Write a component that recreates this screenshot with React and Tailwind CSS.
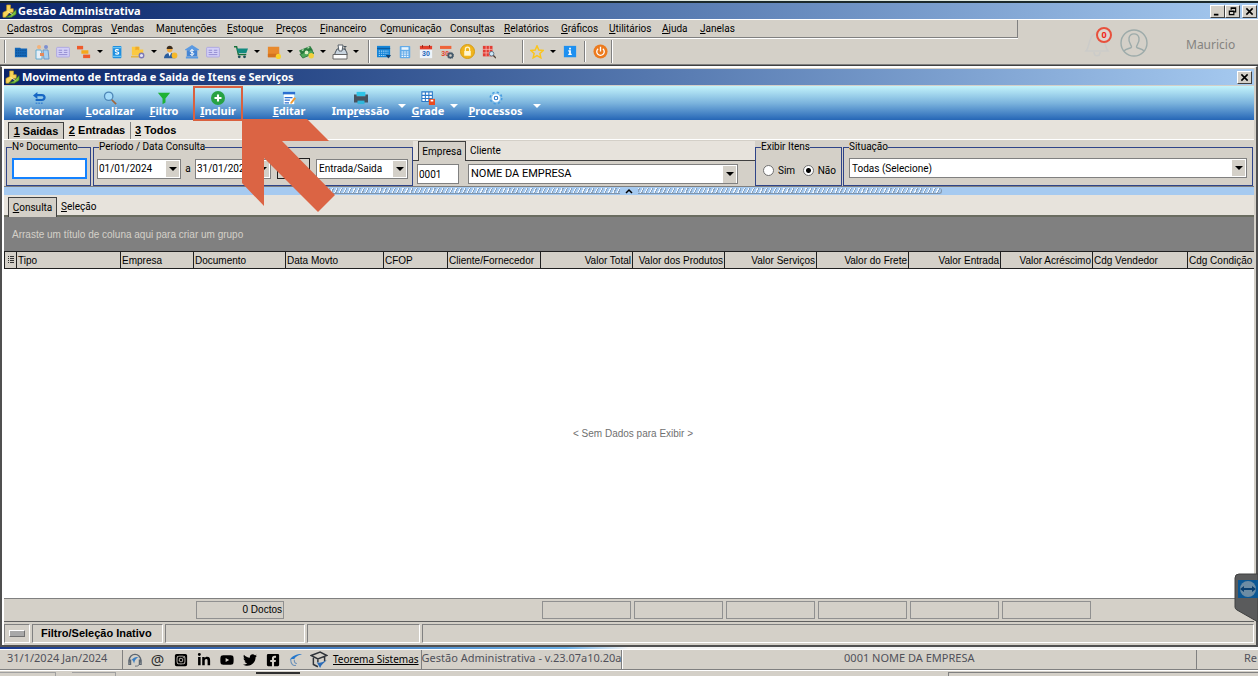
import React from 'react';
import { FaLinkedinIn, FaYoutube, FaTwitter, FaFacebookSquare } from 'react-icons/fa';
import { FaSquareInstagram } from 'react-icons/fa6';

const MENU = [
    ['', 'C', 'adastros'], ['Co', 'm', 'pras'], ['', 'V', 'endas'], ['Ma', 'n', 'utenções'],
    ['', 'E', 'stoque'], ['', 'P', 'reços'], ['', 'F', 'inanceiro'], ['C', 'o', 'municação'],
    ['Consu', 'l', 'tas'], ['', 'R', 'elatórios'], ['', 'G', 'ráficos'], ['', 'U', 'tilitários'],
    ['', 'A', 'juda'], ['', 'J', 'anelas'],
];

const COLUMNS = [
    { label: 'Tipo', width: 'w-[104px]' },
    { label: 'Empresa', width: 'w-[73px]' },
    { label: 'Documento', width: 'w-[92px]' },
    { label: 'Data Movto', width: 'w-[98px]' },
    { label: 'CFOP', width: 'w-16' },
    { label: 'Cliente/Fornecedor', width: 'w-[93px]' },
    { label: 'Valor Total', width: 'w-[92px]', right: true },
    { label: 'Valor dos Produtos', width: 'w-[92px]', right: true },
    { label: 'Valor Serviços', width: 'w-[92px]', right: true },
    { label: 'Valor do Frete', width: 'w-[92px]', right: true },
    { label: 'Valor Entrada', width: 'w-[92px]', right: true },
    { label: 'Valor Acréscimo', width: 'w-[92px]', right: true },
    { label: 'Cdg Vendedor', width: 'w-[95px]' },
    { label: 'Cdg Condição', width: '' },
];

const Hot = ({ parts }) => (
    <>
        {parts[0]}
        <span className="underline underline-offset-1">{parts[1]}</span>
        {parts[2]}
    </>
);

const Svg = ({ children, className = 'size-[14px]' }) => (
    <svg viewBox="0 0 16 16" fill="none" className={`shrink-0 ${className}`} aria-hidden="true">
        {children}
    </svg>
);

const AppLogo = () => (
    <Svg className="size-[15px]">
        <path d="M5 1h4v4h3v4H8l-4 5H1V9l4-2z" fill="#f7d55a" stroke="#c79a22" strokeWidth=".7" />
        <path d="M4 14l5-2 6-6v5l-5 3z" fill="#7cc03c" stroke="#3c7a1c" strokeWidth=".7" />
        <path d="M6 8l5 3" stroke="#fff3b0" />
    </Svg>
);

const icons = {
    archive: (
        <Svg>
            <path d="M1 3h6l1 1h7v10H1z" fill="#1467b8" />
            <path d="M2 6h12M2 9h12M2 12h12" stroke="#0d4b8f" strokeDasharray="1.5 1" />
        </Svg>
    ),
    people: (
        <Svg className="size-4">
            <circle cx="5" cy="3" r="2" fill="#f3b27a" />
            <circle cx="12" cy="3" r="2" fill="#7c8fd0" />
            <path d="M2 6h5l1 4v5H2z" fill="#e6eef6" stroke="#58a6cf" strokeWidth=".9" />
            <path d="M9 6h5l1 9h-5z" fill="#a9d0ee" stroke="#6595c9" strokeWidth=".9" />
            <path d="M6 9h4v3H6z" fill="#e4895a" />
        </Svg>
    ),
    card: (
        <Svg>
            <rect x=".7" y="2.7" width="14.6" height="11" rx="1" fill="#d3cff6" stroke="#aaa4e0" />
            <path d="M3 6h4M3 8.500h4M9 6h4M9 8.500h4M3 11h10" stroke="#8b84cc" />
        </Svg>
    ),
    tree: (
        <Svg>
            <path d="M0 1h7v4H0z" fill="#ef5a2a" />
            <path d="M5 6h8v4H5z" fill="#f4a71c" />
            <path d="M7 11h8v4H7z" fill="#ef5a2a" />
        </Svg>
    ),
    moneyDoc: (
        <Svg>
            <rect x="3" y="1" width="10" height="14" rx="1" fill="#1e8fe0" />
            <path d="M3 3h10M3 13h10" stroke="#6cc4f4" strokeWidth="1.500" />
            <path d="M10 6c-1-1-4-1-4 .7s4 .8 4 2.400-3 1.600-4 .6" stroke="#fff" strokeWidth="1.300" />
        </Svg>
    ),
    boxes: (
        <Svg>
            <path d="M1 2h9v3h4v5h-2v2H1z" fill="#fbc941" />
            <path d="M5 2v4l2-1 2 1V2z" fill="#f0a92a" />
            <path d="M0 13.500h9" stroke="#e9b02e" strokeWidth="1.500" />
            <circle cx="12" cy="12" r="2.600" fill="#e4e2f2" stroke="#7a78b8" strokeWidth="1.500" />
        </Svg>
    ),
    clerk: (
        <Svg>
            <circle cx="6.500" cy="5" r="3.200" fill="#f2a93c" />
            <path d="M3 4.500c0-5 7-5 7 0z" fill="#3a2d20" />
            <path d="M0 15c0-8 13-8 13 0z" fill="#2a5d9e" />
            <path d="M5 9h3l-1.500 4z" fill="#fff" />
            <circle cx="12" cy="12" r="3.300" fill="#f6b82a" />
        </Svg>
    ),
    bank: (
        <Svg>
            <path d="M0 5l8-5 8 5v1H0zM1 13h14v2.500H1z" fill="#5b9ae2" />
            <rect x="2" y="6" width="12" height="7" fill="#4585d4" />
            <path d="M10 6.500c-1-1-4-1-4 .7s4 .9 4 2.700-3 1.900-4 .8M8 4.500v8" stroke="#fff" strokeWidth="1.100" />
        </Svg>
    ),
    cart: (
        <Svg>
            <path d="M0 2h3l2 9h9" stroke="#18703a" strokeWidth="1.600" />
            <path d="M3 4h13l-2 5.500H5z" fill="#128a80" />
            <circle cx="6" cy="13.500" r="1.600" fill="#1f4f58" />
            <circle cx="12" cy="13.500" r="1.600" fill="#1f4f58" />
        </Svg>
    ),
    package: (
        <Svg>
            <rect x="1" y="2" width="13" height="12" fill="#e8892c" />
            <path d="M1 10h13v4H1z" fill="#d4721e" />
            <circle cx="13" cy="13" r="3" fill="#fbd42c" />
        </Svg>
    ),
    cash: (
        <Svg className="size-[15px]">
            <path d="M0 7l12-5 3 5-12 5z" fill="#2c7f40" />
            <path d="M1 11l12-5 3 4-12 5z" fill="#4fa85a" stroke="#1e6b33" strokeWidth=".8" />
            <path d="M3 7l2-1M9 4.500l2-1" stroke="#bfe6b8" strokeWidth="1.300" />
            <circle cx="8" cy="9" r="2" fill="#dff0c8" />
            <circle cx="13" cy="12.500" r="2.900" fill="#f3cf3a" />
        </Svg>
    ),
    register: (
        <Svg className="size-4">
            <path d="M3 9l2-4h8l2 4v2H3z" fill="#c9d4de" stroke="#4a545e" />
            <path d="M6 1h5l-1 6H7z" fill="#fff" stroke="#4a545e" strokeWidth=".9" />
            <path d="M11.500 2.500h3M13 2.500V6" stroke="#4a545e" />
            <path d="M1 10.500h14V15H1z" fill="#fdfdfd" stroke="#666" />
        </Svg>
    ),
    calBlue: (
        <Svg>
            <rect x="0" y="1" width="15" height="13" fill="#1585d8" />
            <path d="M0 4h15" stroke="#0b5ca0" strokeWidth="1.500" />
            <path d="M2 7h11M2 9.500h11M2 12h8" stroke="#a4d4f8" strokeWidth="1.200" strokeDasharray="1.500 1" />
            <path d="M10 11.500h6l-3 4z" fill="#17406c" />
        </Svg>
    ),
    calc: (
        <Svg>
            <rect x="2" y="1" width="12" height="14" rx="1" fill="#63abe8" />
            <rect x="4" y="2.500" width="8" height="3" fill="#e8f4fd" />
            <path d="M4 8h8M4 10.500h8M4 13h8" stroke="#f5faff" strokeWidth="1.400" strokeDasharray="2 1" />
        </Svg>
    ),
    cal30: (
        <Svg>
            <rect x="1" y="2" width="14" height="13" fill="#edf3fa" />
            <rect x="1" y="1" width="14" height="4" fill="#e2402c" />
            <path d="M4 0v3M12 0v3" stroke="#8c2015" />
            <text x="8" y="12.500" textAnchor="middle" fontSize="8" fontWeight="700" fontFamily="Liberation Sans, sans-serif" fill="#1c63b8">30</text>
        </Svg>
    ),
    cal30Gear: (
        <Svg>
            <rect x="0" y="1" width="13" height="3.500" fill="#ee6338" />
            <text x="6" y="12" textAnchor="middle" fontSize="8" fontWeight="700" fontFamily="Liberation Sans, sans-serif" fill="#e2402c">30</text>
            <circle cx="12" cy="12" r="2.500" stroke="#43586a" strokeWidth="2" />
            <circle cx="12" cy="12" r="3.700" stroke="#43586a" strokeDasharray="1.300 1.300" />
        </Svg>
    ),
    lock: (
        <Svg className="size-[15px]">
            <circle cx="8" cy="8" r="7.500" fill="#f0b41c" stroke="#d39a10" />
            <path d="M5.700 8V5.500c0-3 4.600-3 4.600 0V8" stroke="#fff6cf" strokeWidth="1.300" />
            <rect x="4.500" y="7.500" width="7" height="5" fill="#fff6cf" />
        </Svg>
    ),
    gridSearch: (
        <Svg>
            <rect x="1" y="1" width="11" height="12" fill="#e23c33" />
            <path d="M1 5h11M1 9h11M4.700 1v12M8.400 1v12" stroke="#f9c6c0" strokeWidth=".8" />
            <circle cx="11" cy="10" r="2.600" fill="#cfe6f5" stroke="#55748a" />
            <path d="M13 12l3 3" stroke="#4a3b30" strokeWidth="1.500" />
        </Svg>
    ),
    star: (
        <Svg>
            <path d="M8 1l2.100 4.700 5 .5-3.800 3.400 1.100 5L8 12l-4.400 2.600 1.100-5L.9 6.200l5-.5z" stroke="#fbc51c" strokeWidth="1.700" />
        </Svg>
    ),
    info: (
        <Svg>
            <rect x="1" y="1" width="14" height="13" fill="#1e90f0" />
            <path d="M7 3h2v2H7zM6 6h3v4h1v1.500H6V10h1V7.500H6z" fill="#fff" />
        </Svg>
    ),
    power: (
        <Svg className="size-[15px]">
            <circle cx="8" cy="8" r="7.500" fill="#ec7a1d" />
            <path d="M5.500 5a4 4 0 1 0 5 0M8 3v5" stroke="#fff" strokeWidth="1.400" />
        </Svg>
    ),
};

const ToolIcon = ({ name, label }) => (
    <button aria-label={label} className="flex w-[21px] shrink-0 items-center justify-center">
        {icons[name]}
    </button>
);

const Caret = ({ label, light }) => (
    <button aria-label={label} className="flex w-3 shrink-0 items-center justify-center">
        <span className={`border-transparent ${light ? 'border-x-4 border-t-4 border-t-white' : 'border-x-[3px] border-t-[3px] border-t-black'}`} />
    </button>
);

const Sep = () => <span className="h-full w-[2px] shrink-0 border-l border-[#808080] bg-white" />;

const WinButton = ({ label, children }) => (
    <button
        aria-label={label}
        className="flex h-[13px] w-[15px] items-center justify-center border border-t-white border-r-[#404040] border-b-[#404040] border-l-white bg-[#d4d0c8]"
    >
        <svg viewBox="0 0 10 10" className="size-[9px]" fill="none" stroke="#000">{children}</svg>
    </button>
);

const Cross = () => <path d="M1.500 1.500l7 7M8.500 1.500l-7 7" strokeWidth="1.700" />;

const ribbonIcons = {
    back: (
        <Svg>
            <path d="M0 5l5-4v2.500h5c6 0 6 8 0 8H3V9h7c2.500 0 2.500-3 0-3H5v3z" fill="#1766c4" />
            <path d="M3 14h9" stroke="#3e86d4" strokeWidth="1.500" strokeDasharray="2 1" />
        </Svg>
    ),
    search: (
        <Svg>
            <circle cx="6.500" cy="6" r="4.800" fill="#a5dcfa" stroke="#4e87b8" strokeWidth="1.500" />
            <path d="M10 10l5 5" stroke="#a0663c" strokeWidth="2" />
        </Svg>
    ),
    filter: <Svg><path d="M1 2h14L9.700 8.500V13L6.300 15V8.500z" fill="#1fb235" /></Svg>,
    add: (
        <Svg>
            <circle cx="8" cy="8" r="8" fill="#27a243" />
            <path d="M8 4v8M4 8h8" stroke="#fff" strokeWidth="2.400" />
        </Svg>
    ),
    edit: (
        <Svg>
            <path d="M1 1h14v3H1z" fill="#2b6fd0" />
            <path d="M2 4h12v11H2z" fill="#fff" />
            <path d="M3 7.500h9M3 10.500h6M3 13.500h5" stroke="#2b6fd0" strokeWidth="1.500" />
            <path d="M9 14l5-7 2 1.500-5 6z" fill="#f39a2d" />
        </Svg>
    ),
    print: (
        <Svg>
            <rect x="3" y="1" width="10" height="5" fill="#2fc4e6" />
            <path d="M0 4h3v2h10V4h3v9H0z" fill="#47525e" />
            <rect x="4" y="11" width="8" height="4" fill="#2fb6dc" />
        </Svg>
    ),
    grid: (
        <Svg>
            <rect x="1" y="1" width="12" height="11" fill="#fff" />
            <path d="M1 1h12v11H1zM5 1v11M9 1v11M1 5h12M1 8.500h12" stroke="#2a78c8" strokeWidth="1.200" />
            <rect x="9" y="9" width="7" height="7" fill="#ea4a1e" />
            <path d="M11 10h3v2h-3z" fill="#fff" />
        </Svg>
    ),
    gear: (
        <Svg>
            <circle cx="8" cy="8" r="6.500" stroke="#4a9de0" strokeWidth="2" strokeDasharray="2.600 2.500" />
            <circle cx="8" cy="8" r="5" fill="#fff" stroke="#8cc4ee" />
            <circle cx="8" cy="8" r="2" stroke="#2a78c8" strokeWidth="1.300" />
        </Svg>
    ),
};

const RibbonButton = ({ icon, parts, className = '' }) => (
    <button className={`flex flex-col items-center text-white ${className}`}>
        {ribbonIcons[icon]}
        <span className="font-['Noto_Sans'] text-[11px] leading-[11px] font-bold whitespace-nowrap">
            <Hot parts={parts} />
        </span>
    </button>
);

const Group = ({ title, className, children }) => (
    <fieldset className={`min-w-0 border border-[#2f4488] px-[3px] ${className}`}>
        <legend className="ml-[2px] h-3 leading-3">{title}</legend>
        {children}
    </fieldset>
);

const DropMark = () => (
    <span className="pointer-events-none flex w-[13px] shrink-0 items-center justify-center bg-[#d4d0c8]">
        <span className="border-x-4 border-t-4 border-transparent border-t-black" />
    </span>
);

const DateBox = ({ label, value, className }) => (
    <div className={`flex h-5 border border-[#808080] bg-white p-px ${className}`}>
        <input aria-label={label} defaultValue={value} className="w-full min-w-0 outline-none" />
        <DropMark />
    </div>
);

const Combo = ({ label, value, className }) => (
    <div className={`grid h-5 border border-[#808080] bg-white p-px ${className}`}>
        <select aria-label={label} className="col-start-1 row-start-1 w-full appearance-none pl-px outline-none">
            <option>{value}</option>
        </select>
        <span className="col-start-1 row-start-1 flex justify-self-end"><DropMark /></span>
    </div>
);

const StatusCell = ({ className, children }) => (
    <div className={`flex h-[19px] items-center border border-t-[#808080] border-r-white border-b-white border-l-[#808080] ${className}`}>
        {children}
    </div>
);

const Header = () => (
    <header className="bg-[#d4d0c8]">
        <div className="h-[3px] border-t border-[#dfe8e0] bg-[#1c2a2c]" />
        <div className="flex h-4 items-center justify-between bg-linear-to-r from-[#0a246a] to-[#a6caf0] pr-px pl-[2px]">
            <h1 className="flex items-center gap-px font-['Noto_Sans'] text-[11px] font-bold text-white">
                <AppLogo /> Gestão Administrativa
            </h1>
            <div className="flex">
                <WinButton label="Minimizar"><path d="M1 8.500h5" strokeWidth="2" /></WinButton>
                <WinButton label="Restaurar"><path d="M3.500 3V1h5v4.500H7M1.500 4.500h5v4h-5zM3.500 1.500h5M1.500 5h5" strokeWidth="1.300" /></WinButton>
                <span className="w-[2px]" />
                <WinButton label="Fechar"><Cross /></WinButton>
            </div>
        </div>
        <div className="flex h-[45px] border-t border-white">
            <div className="min-w-0 flex-1">
                <nav className="grid h-[18px] grid-cols-[55px_49px_45px_71px_49px_44px_60px_70px_54px_57px_48px_53px_38px_auto] items-center border-r border-b border-[#808080] pl-[7px] text-left">
                    {MENU.map(parts => (
                        <button key={parts.join('')} className="text-left whitespace-nowrap"><Hot parts={parts} /></button>
                    ))}
                </nav>
                <div className="flex h-[26px] items-stretch border-t border-white">
                    <div className="flex w-[370px] py-px pl-1">
                        <Sep />
                        <div className="flex w-[220px] pl-1">
                            <ToolIcon name="archive" label="Arquivo" />
                            <ToolIcon name="people" label="Pessoas" />
                            <ToolIcon name="card" label="Cartões" />
                            <ToolIcon name="tree" label="Plano de contas" />
                            <Caret label="Mais contas" />
                            <ToolIcon name="moneyDoc" label="Documento financeiro" />
                            <ToolIcon name="boxes" label="Itens" />
                            <Caret label="Mais itens" />
                            <ToolIcon name="clerk" label="Vendedor" />
                            <ToolIcon name="bank" label="Banco" />
                            <ToolIcon name="card" label="Cheques" />
                        </div>
                        <div className="flex flex-1 pl-1">
                            <ToolIcon name="cart" label="Vendas" />
                            <Caret label="Mais vendas" />
                            <ToolIcon name="package" label="Estoque" />
                            <Caret label="Mais estoque" />
                            <ToolIcon name="cash" label="Financeiro" />
                            <Caret label="Mais financeiro" />
                            <ToolIcon name="register" label="Caixa" />
                            <Caret label="Mais caixa" />
                        </div>
                        <Sep />
                    </div>
                    <div className="flex w-[154px] py-px pl-[3px]">
                        <div className="flex flex-1">
                            <ToolIcon name="calBlue" label="Agenda" />
                            <ToolIcon name="calc" label="Calculadora" />
                            <ToolIcon name="cal30" label="Calendário" />
                            <ToolIcon name="cal30Gear" label="Configurar calendário" />
                            <ToolIcon name="lock" label="Bloquear" />
                            <ToolIcon name="gridSearch" label="Pesquisar grade" />
                        </div>
                        <Sep />
                    </div>
                    <div className="flex w-[89px] py-px pl-[2px]">
                        <ToolIcon name="star" label="Favoritos" />
                        <Caret label="Mais favoritos" />
                        <ToolIcon name="info" label="Informações" />
                        <div className="flex flex-1 py-px pl-1"><Sep /></div>
                        <ToolIcon name="power" label="Sair" />
                        <Sep />
                    </div>
                </div>
            </div>
            <div className="flex w-[240px] shrink-0 items-center pt-px pl-[66px]">
                <button aria-label="Notificações" className="relative">
                    <svg viewBox="0 0 28 30" className="h-[30px] w-7" fill="none" stroke="#cbcbc9">
                        <path d="M2 23c4-4 2-16 11-18 9 2 7 14 11 18zM10 24c0 5 6 5 6 0" strokeWidth="1.500" />
                    </svg>
                    <span className="absolute -top-px left-3 flex size-4 items-center justify-center rounded-full border-2 border-[#e8503c] bg-[#ddd6ce] font-['Noto_Sans'] text-[9px] font-bold text-[#f0281c]">0</span>
                </button>
                <svg viewBox="0 0 28 28" className="ml-2 size-7" fill="none" stroke="#9dabaa" strokeWidth="1.400">
                    <circle cx="14" cy="14" r="13" />
                    <path d="M4 22c2-3 7-2 7.500-4 .4-1.500-3.500-4-2.500-9 1-5.500 9-5.500 10 0 1 5-2.900 7.500-2.500 9 .5 2 5.500 1 7.500 4" />
                </svg>
                <span className="ml-[38px] pt-1 font-['Noto_Sans'] text-xs text-[#858380]">Mauricio</span>
            </div>
        </div>
        <div className="h-[2px] border-t border-[#808080] bg-[#404040]" />
    </header>
);

const Ribbon = () => (
    <div className="flex h-[34px] bg-linear-to-b from-[#c4f4fb] via-[#7cb4dd] to-[#2566b6] pt-[5px]">
        <RibbonButton icon="back" parts={['Retornar', '', '']} className="w-[71px]" />
        <RibbonButton icon="search" parts={['', 'L', 'ocalizar']} className="w-[70px]" />
        <RibbonButton icon="filter" parts={['', 'F', 'iltro']} className="w-[38px]" />
        <div className="relative mx-[11px] flex w-12 justify-center">
            <RibbonButton icon="add" parts={['', 'I', 'ncluir']} />
            <span className="pointer-events-none absolute -inset-x-px -top-[5px] -bottom-px z-10 border-2 border-[#d9613f]" />
            <svg viewBox="0 0 94 94" className="pointer-events-none absolute top-[28px] left-12 z-20 size-[94px]" fill="#db6444" aria-hidden="true">
                <path d="M0 0H65L87 22H40L93 76L76 93L22 39V87L0 64Z" />
            </svg>
        </div>
        <RibbonButton icon="edit" parts={['', 'E', 'ditar']} className="w-[72px]" />
        <RibbonButton icon="print" parts={['Imp', 'r', 'essão']} className="w-[71px]" />
        <Caret light label="Opções de impressão" />
        <RibbonButton icon="grid" parts={['', 'G', 'rade']} className="w-10" />
        <Caret light label="Opções de grade" />
        <RibbonButton icon="gear" parts={['', 'P', 'rocessos']} className="w-[71px]" />
        <Caret light label="Opções de processos" />
    </div>
);

const Filters = () => (
    <form className="flex h-12 border-t border-b border-t-white border-b-[#808080] bg-[#d4d0c8] pt-px pr-px pl-[2px]">
        <Group title="Nº Documento" className="w-[85px]">
            <input aria-label="Nº Documento" className="mt-[5px] ml-[2px] h-[21px] w-[75px] border-2 border-[#1482ff] bg-white px-1 outline-none" />
        </Group>
        <Group title="Período / Data Consulta" className="ml-[2px] w-[320px]">
            <div className="mt-[5px] flex items-center">
                <DateBox label="Data inicial" value="01/01/2024" className="w-[84px]" />
                <span className="w-[14px] text-center">a</span>
                <DateBox label="Data final" value="31/01/2024" className="w-[76px]" />
                <button aria-label="Selecionar período" className="mx-[6px] h-[21px] w-[33px] border border-[#202020]" />
                <Combo label="Tipo de movimento" value="Entrada/Saida" className="w-[92px]" />
            </div>
        </Group>
        <div className="flex w-[342px] flex-col">
            <div className="flex h-5 items-stretch bg-[#e7e3dc]">
                <span className="w-[5px] border-b border-[#404040]" />
                <button className="w-12 border border-b-0 border-[#404040] bg-[#d4d0c8]">Empresa</button>
                <button className="flex-1 border-b border-[#404040] pl-1 text-left">Cliente</button>
            </div>
            <div className="mt-[3px] flex gap-[9px] pl-1">
                <input aria-label="Código da empresa" defaultValue="0001" className="h-5 w-[42px] border border-[#808080] bg-white px-px outline-none" />
                <Combo label="Empresa" value="NOME DA EMPRESA" className="w-[270px] text-[11px]" />
            </div>
        </div>
        <Group title="Exibir Itens" className="w-[87px]">
            <div className="mt-[10px] flex items-center justify-between pr-[2px] pl-1">
                {['Sim', 'Não'].map(option => (
                    <label key={option} className="flex items-center gap-1">
                        <input
                            type="radio"
                            name="exibir"
                            defaultChecked={option === 'Não'}
                            className="size-[11px] appearance-none rounded-full border border-[#707070] bg-white checked:bg-[radial-gradient(circle,#000_2px,#fff_3px)]"
                        />
                        {option}
                    </label>
                ))}
            </div>
        </Group>
        <Group title="Situação" className="ml-px flex-1">
            <Combo label="Situação" value="Todas (Selecione)" className="mt-[5px] mr-[2px] ml-[2px]" />
        </Group>
    </form>
);

const Splitter = () => (
    <div className="flex h-2 justify-center bg-[#a6caf0] pr-[6px]">
        <div className="my-px w-[310px] border-b border-[#8095ac] bg-[repeating-linear-gradient(115deg,#eef6ff_0_1px,#8aa2bd_1px_2px,#a6caf0_2px_4px)]" />
        <button aria-label="Recolher filtros" className="flex w-[18px] items-center justify-center">
            <svg viewBox="0 0 8 6" className="h-[6px] w-2" fill="none" stroke="#000" strokeWidth="1.500"><path d="M1 5l3-3 3 3" /></svg>
        </button>
        <div className="my-px w-[304px] rounded-r-sm border-r border-b border-[#8095ac] bg-[repeating-linear-gradient(115deg,#eef6ff_0_1px,#8aa2bd_1px_2px,#a6caf0_2px_4px)]" />
    </div>
);

const DataGrid = () => (
    <section className="flex flex-1 flex-col bg-white font-['Liberation_Sans'] text-[10px]">
        <div className="flex h-[34px] items-center bg-[#808080] pl-2 text-[#d4d0c8]">
            Arraste um título de coluna aqui para criar um grupo
        </div>
        <table className="w-full table-fixed border-collapse">
            <thead>
                <tr className="h-[17px] bg-[#d4d0c8]">
                    <th className="w-3 border border-[#202020] p-0">
                        <svg viewBox="0 0 8 10" className="mx-auto h-[10px] w-2" stroke="#333"><path d="M3 1.500h4M3 3.500h4M3 5.500h4M3 7.500h4M1 1.500h1M1 3.500h1M1 5.500h1M1 7.500h1" /></svg>
                    </th>
                    {COLUMNS.map(({ label, width, right }) => (
                        <th
                            key={label}
                            className={`overflow-hidden border border-r-0 border-[#202020] px-px py-0 font-normal whitespace-nowrap ${width} ${right ? 'text-right' : 'text-left'}`}
                        >
                            {label}
                        </th>
                    ))}
                </tr>
            </thead>
        </table>
        <div className="flex flex-1 items-center justify-center pl-2 text-[#707070]">&lt; Sem Dados para Exibir &gt;</div>
        <div className="grid h-6 grid-cols-[189px_92px_255px_repeat(6,92px)_1fr] items-center border-t border-b border-t-[#808080] border-b-[#606060] bg-[#d4d0c8]">
            <span />
            <output className="mr-px ml-[3px] h-[18px] border border-[#909090] pr-px text-right leading-4">0 Doctos</output>
            <span />
            {COLUMNS.filter(c => c.right).map(c => (
                <output key={c.label} aria-label={c.label} className="mr-px ml-[2px] h-[18px] border border-[#909090]" />
            ))}
        </div>
    </section>
);

const MovementWindow = () => (
    <main className="flex flex-1 flex-col border-2 border-t border-[#505050] border-t-white bg-[#d4d0c8]">
        <div className="flex flex-1 flex-col border-2 border-t border-b-0 border-white border-r-[#d4d0c8]">
            <div className="mt-px flex h-4 items-center justify-between bg-linear-to-r from-[#0a246a] to-[#a6caf0] pr-[2px] pl-px">
                <h2 className="flex items-center gap-[2px] font-['Noto_Sans'] text-[11px] font-bold text-white">
                    <AppLogo /> Movimento de Entrada e Saida de Itens e Serviços
                </h2>
                <WinButton label="Fechar janela"><Cross /></WinButton>
            </div>
            <div className="h-px bg-[#d4d0c8]" />
            <Ribbon />
            <div className="flex h-[19px] items-stretch bg-[#e7e3dc] pt-[2px] pl-1 font-['Liberation_Sans'] text-[11px] font-bold">
                <button className="w-14 border border-b-0 border-[#404040] bg-[#d4d0c8]"><Hot parts={['', '1', ' Saidas']} /></button>
                <button className="w-[67px] border-r border-[#808080]"><Hot parts={['', '2', ' Entradas']} /></button>
                <button className="px-1"><Hot parts={['', '3', ' Todos']} /></button>
            </div>
            <Filters />
            <Splitter />
            <div className="flex h-[22px] items-stretch border-b-2 border-[#6a6c60] bg-[#e7e3dc] pt-[2px] pl-1">
                <button className="-mb-[2px] w-[49px] border border-b-0 border-[#404040] bg-[#d4d0c8]"><Hot parts={['', 'C', 'onsulta']} /></button>
                <button className="px-1"><Hot parts={['', 'S', 'eleção']} /></button>
            </div>
            <DataGrid />
            <div className="flex h-[23px] items-center gap-[2px]">
                <StatusCell className="w-[26px] justify-center">
                    <span className="h-[7px] w-4 border border-t-white border-r-[#707070] border-b-[#707070] border-l-white bg-[#a8a8a8]" />
                </StatusCell>
                <StatusCell className="w-[131px] pl-2 font-['Liberation_Sans'] text-[11px] font-bold">Filtro/Seleção Inativo</StatusCell>
                <StatusCell className="w-[140px]" />
                <StatusCell className="w-[113px]" />
                <StatusCell className="flex-1" />
            </div>
        </div>
    </main>
);

const Footer = () => (
    <footer className="bg-[#d4d0c8] text-[#50505a]">
        <div className="h-[2px] bg-linear-to-r from-[#1c3a8c] via-[#6ab0e8] via-45% to-[#f4f4f4] to-50%" />
        <div className="flex h-[21px] items-stretch border-t border-b border-t-white border-b-[#808080] font-['Noto_Sans'] text-[11px] leading-[15px] whitespace-nowrap">
            <span className="w-[123px] border-r border-[#808080] pl-[7px]">31/1/2024 Jan/2024</span>
            <nav className="flex items-center text-[14px] text-black">
                <a href="#suporte" aria-label="Suporte" className="flex w-[23px] justify-center">
                    <Svg>
                        <path d="M1.500 11V8a6.500 6.500 0 0 1 13 0v3M1 8h2v5H1zM13 8h2v5h-2z" stroke="#5b6570" strokeWidth="1.400" />
                        <path d="M4 8c3-4 6-4 9-3-3 0-5 2-6 7-1-2-1-4-3-4z" fill="#3a7fc4" />
                        <path d="M13 13c-1 2-3 2-5 2" stroke="#5b6570" />
                    </Svg>
                </a>
                <a href="#email" aria-label="E-mail" className="w-[23px] text-center text-[15px] text-[#303030]">@</a>
                <a href="#instagram" aria-label="Instagram" className="flex w-[23px] justify-center"><FaSquareInstagram /></a>
                <a href="#linkedin" aria-label="LinkedIn" className="flex w-[23px] justify-center"><FaLinkedinIn /></a>
                <a href="#youtube" aria-label="YouTube" className="flex w-[23px] justify-center"><FaYoutube /></a>
                <a href="#twitter" aria-label="Twitter" className="flex w-[23px] justify-center"><FaTwitter /></a>
                <a href="#facebook" aria-label="Facebook" className="flex w-[23px] justify-center"><FaFacebookSquare /></a>
                <a href="#teorema" aria-label="Teorema" className="flex w-[23px] justify-center">
                    <Svg>
                        <path d="M1 8c2-5 8-7 14-7-6 2-9 4-9 7 0-2-3-1-5 0z" fill="#2477cc" />
                        <path d="M2 8c0 5 3 7 6 6M6 8c0 3 1 4 3 4" stroke="#6a8fb8" strokeWidth="1.200" />
                    </Svg>
                </a>
                <a href="#academia" aria-label="Academia" className="flex w-6 justify-center">
                    <Svg className="size-[18px]">
                        <path d="M1 4l8-3 6 3-8 3zM3 6v6l4 2M7 7v3M13 5v4" stroke="#30343a" strokeWidth="1.300" />
                        <path d="M6 10c3 1 5 0 9-2-3 3-5 4-6 7z" fill="#2b6cb8" />
                    </Svg>
                </a>
            </nav>
            <a href="#sistemas" className="border-r border-[#808080] px-[2px] text-[10px] leading-[19px] text-black underline">Teorema Sistemas</a>
            <span className="w-[200px] border-r border-[#808080]">Gestão Administrativa - v.23.07a10.20a</span>
            <span className="flex-1 border-l border-white text-center">0001 NOME DA EMPRESA</span>
            <span className="w-[62px] border-l border-[#808080] pr-px text-right">Re</span>
        </div>
        <div className="flex h-[6px] gap-4 border-t border-white pt-px">
            <span className="w-14 border-t border-r border-[#a0a0a0]" />
            <span className="w-11 border-t border-r border-[#a0a0a0]" />
            <span className="w-[108px]" />
            <span className="w-11 border-t-2 border-[#303030]" />
            <span className="w-[616px]" />
            <span className="flex-1 border-t border-l border-[#808080]" />
        </div>
    </footer>
);

export default function App() {
    return (
        <div className="relative flex min-h-screen flex-col overflow-hidden bg-[#d4d0c8] font-['Roboto'] text-[10px] text-black">
            <Header />
            <MovementWindow />
            <Footer />
            <svg viewBox="0 0 24 50" className="absolute right-0 bottom-[53px] z-30 h-[50px] w-6" aria-hidden="true">
                <path d="M1 5q0-4 4-4h19v48L3 37q-2-1-2-3z" fill="#5a5b5c" stroke="#3f4040" />
                <rect x="4" y="7" width="20" height="18" fill="#0b5794" />
                <circle cx="14" cy="16" r="8" fill="#6c8ca4" />
                <path d="M6 16l4-3v2h8v-2l4 3-4 3v-2h-8v2z" fill="#0a3f70" />
            </svg>
        </div>
    );
}
